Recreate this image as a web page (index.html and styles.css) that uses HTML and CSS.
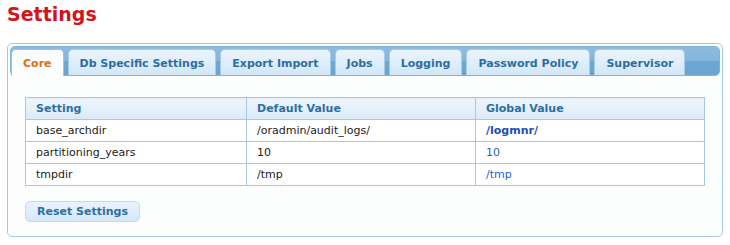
FILE: index.html
```html
<!DOCTYPE html>
<html lang="en">
<head>
    <meta charset="UTF-8">
    <meta name="viewport" content="width=device-width, initial-scale=1.0">
    <title>Settings</title>
    <link rel="stylesheet" href="styles.css">
</head>
<body>

    <h1 class="page-title">Settings</h1>

    <div class="tabs">
        <ul class="tab-nav">
            <li class="tab active"><a href="#core">Core</a></li>
            <li class="tab"><a href="#db">Db Specific Settings</a></li>
            <li class="tab"><a href="#export">Export Import</a></li>
            <li class="tab"><a href="#jobs">Jobs</a></li>
            <li class="tab"><a href="#logging">Logging</a></li>
            <li class="tab"><a href="#password">Password Policy</a></li>
            <li class="tab"><a href="#supervisor">Supervisor</a></li>
        </ul>

        <div class="tab-panel" id="core">
            <table class="settings-table">
                <thead>
                    <tr>
                        <th class="col-setting">Setting</th>
                        <th class="col-default">Default Value</th>
                        <th class="col-global">Global Value</th>
                    </tr>
                </thead>
                <tbody>
                    <tr>
                        <td>base_archdir</td>
                        <td>/oradmin/audit_logs/</td>
                        <td class="global changed">/logmnr/</td>
                    </tr>
                    <tr>
                        <td>partitioning_years</td>
                        <td>10</td>
                        <td class="global">10</td>
                    </tr>
                    <tr>
                        <td>tmpdir</td>
                        <td>/tmp</td>
                        <td class="global">/tmp</td>
                    </tr>
                </tbody>
            </table>

            <button type="button" class="btn">Reset Settings</button>
        </div>
    </div>

</body>
</html>
```

FILE: styles.css
```css
body {
    font-family: "DejaVu Sans", Verdana, sans-serif;
    font-size: 11px;
    color: #222222;
    background: #ffffff;
    margin: 0 7px;
}

.page-title {
    color: #d3141c;
    font-size: 19px;
    line-height: 22px;
    margin: 3px 0 18px 0;
}

/* tabs container */
.tabs {
    border: 1px solid #a6c9e2;
    border-radius: 5px;
    background: #fcfdfd;
    padding: 2px;
}

.tab-nav {
    list-style: none;
    margin: 0;
    padding: 2px 2px 0 0;
    display: flex;
    border: 1px solid #7db2dc;
    border-radius: 5px;
    background: linear-gradient(to bottom, #8dbbdf 0%, #86b6dc 50%, #6ea7d3 51%, #6aa4d1 100%);
}

.tab {
    margin-right: 4px;
    border: 1px solid #a9cbe6;
    border-bottom: 0;
    border-radius: 5px 5px 0 0;
    background: linear-gradient(to bottom, #eaf4fd 0%, #dfeefb 50%, #d3e6f6 100%);
}

.tab a {
    display: block;
    padding: 7px 11px 4px 11px;
    line-height: 14px;
    font-weight: bold;
    color: #2e6e9e;
    text-decoration: none;
}

.tab.active {
    background: #fcfdfd;
    border-color: #9ac3e4;
    margin-bottom: -1px;
    padding-bottom: 1px;
}

.tab.active a {
    color: #e17009;
}

/* panel */
.tab-panel {
    padding: 21px 15px 12px 15px;
}

.settings-table {
    width: 100%;
    border-collapse: collapse;
    table-layout: fixed;
    border: 1px solid #a6c9e2;
}

.col-setting { width: 200px; }
.col-default { width: 208px; }

.settings-table th,
.settings-table td {
    border: 1px solid #a6c9e2;
    padding: 4px 10px;
    line-height: 13px;
    text-align: left;
}

.settings-table th {
    font-weight: bold;
    color: #2e6e9e;
    background: linear-gradient(to bottom, #edf5fc 0%, #e3eff9 60%, #d9e9f7 100%);
}

.settings-table td {
    background: #ffffff;
}

.global {
    color: #1f5fcc;
}

.global.changed {
    font-weight: bold;
    color: #1a4fb8;
}

.btn {
    margin-top: 15px;
    font-family: "DejaVu Sans", Verdana, sans-serif;
    font-size: 11px;
    font-weight: bold;
    line-height: 14px;
    color: #2e6e9e;
    padding: 3px 11px 2px 11px;
    border: 1px solid #c5dbec;
    border-radius: 5px;
    background: linear-gradient(to bottom, #e9f3fc 0%, #dfeefb 50%, #d5e8f7 100%);
    cursor: pointer;
}

.btn:hover {
    background: #d0e5f5;
}
```
